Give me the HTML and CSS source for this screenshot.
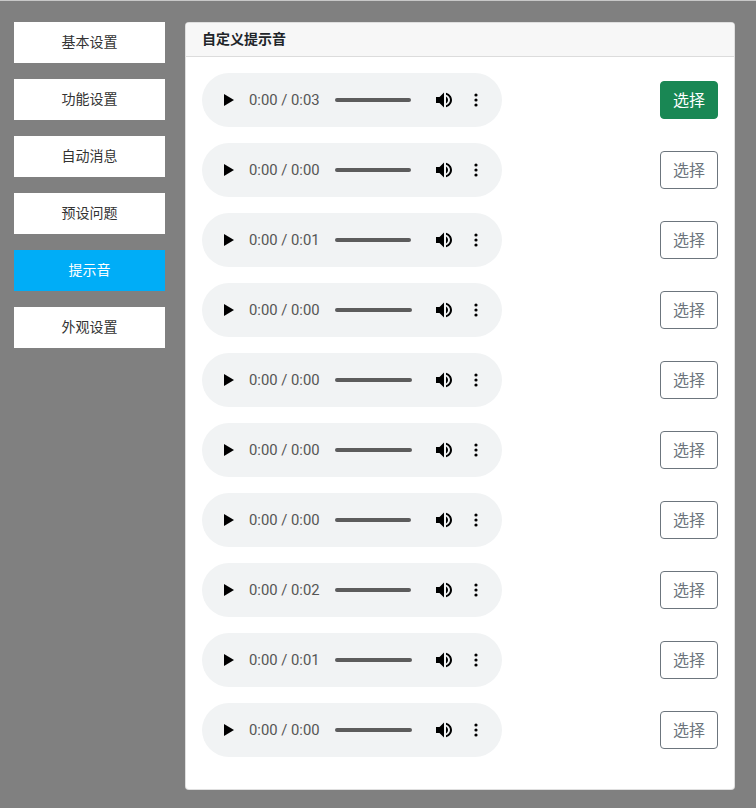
FILE: index.html
```html
<!DOCTYPE html>
<html lang="zh-CN">
<head>
    <meta charset="UTF-8">
    <meta name="viewport" content="width=device-width, initial-scale=1.0">
    <title>提示音</title>
    <link rel="stylesheet" href="styles.css">
</head>
<body>
<svg class="icon-defs" width="0" height="0">
    <symbol id="icon-play" viewBox="0 0 12 14"><path d="M1 1v12l10-6z"/></symbol>
    <symbol id="icon-volume" viewBox="0 0 18 18"><path d="M1 6v6h3.500L9 16.500V1.500L4.500 6zM11 1.800v2c2.300.8 4 2.800 4 5.200s-1.700 4.400-4 5.200v2c3.400-.9 6-3.700 6-7.200s-2.600-6.300-6-7.200zM11 5.500v7c1.300-.7 2-2 2-3.500s-.7-2.800-2-3.500z"/></symbol>
    <symbol id="icon-more" viewBox="0 0 4 14"><circle cx="2" cy="2" r="1.600"/><circle cx="2" cy="7" r="1.600"/><circle cx="2" cy="12" r="1.600"/></symbol>
</svg>
<div class="page">
    <nav class="side-menu">
        <a class="menu-item">基本设置</a>
        <a class="menu-item">功能设置</a>
        <a class="menu-item">自动消息</a>
        <a class="menu-item">预设问题</a>
        <a class="menu-item active">提示音</a>
        <a class="menu-item">外观设置</a>
    </nav>
    <section class="card">
        <div class="card-header">自定义提示音</div>
        <div class="card-body">
            <div class="sound-row">
                <div class="player">
                    <svg class="icon-play"><use href="#icon-play"/></svg>
                    <span class="player-time">0:00 / 0:03</span>
                    <span class="player-track"></span>
                    <svg class="icon-volume"><use href="#icon-volume"/></svg>
                    <svg class="icon-more"><use href="#icon-more"/></svg>
                </div>
                <button class="btn btn-selected">选择</button>
            </div>
            <div class="sound-row">
                <div class="player">
                    <svg class="icon-play"><use href="#icon-play"/></svg>
                    <span class="player-time">0:00 / 0:00</span>
                    <span class="player-track"></span>
                    <svg class="icon-volume"><use href="#icon-volume"/></svg>
                    <svg class="icon-more"><use href="#icon-more"/></svg>
                </div>
                <button class="btn">选择</button>
            </div>
            <div class="sound-row">
                <div class="player">
                    <svg class="icon-play"><use href="#icon-play"/></svg>
                    <span class="player-time">0:00 / 0:01</span>
                    <span class="player-track"></span>
                    <svg class="icon-volume"><use href="#icon-volume"/></svg>
                    <svg class="icon-more"><use href="#icon-more"/></svg>
                </div>
                <button class="btn">选择</button>
            </div>
            <div class="sound-row">
                <div class="player">
                    <svg class="icon-play"><use href="#icon-play"/></svg>
                    <span class="player-time">0:00 / 0:00</span>
                    <span class="player-track wide"></span>
                    <svg class="icon-volume"><use href="#icon-volume"/></svg>
                    <svg class="icon-more"><use href="#icon-more"/></svg>
                </div>
                <button class="btn">选择</button>
            </div>
            <div class="sound-row">
                <div class="player">
                    <svg class="icon-play"><use href="#icon-play"/></svg>
                    <span class="player-time">0:00 / 0:00</span>
                    <span class="player-track wide"></span>
                    <svg class="icon-volume"><use href="#icon-volume"/></svg>
                    <svg class="icon-more"><use href="#icon-more"/></svg>
                </div>
                <button class="btn">选择</button>
            </div>
            <div class="sound-row">
                <div class="player">
                    <svg class="icon-play"><use href="#icon-play"/></svg>
                    <span class="player-time">0:00 / 0:00</span>
                    <span class="player-track wide"></span>
                    <svg class="icon-volume"><use href="#icon-volume"/></svg>
                    <svg class="icon-more"><use href="#icon-more"/></svg>
                </div>
                <button class="btn">选择</button>
            </div>
            <div class="sound-row">
                <div class="player">
                    <svg class="icon-play"><use href="#icon-play"/></svg>
                    <span class="player-time">0:00 / 0:00</span>
                    <span class="player-track"></span>
                    <svg class="icon-volume"><use href="#icon-volume"/></svg>
                    <svg class="icon-more"><use href="#icon-more"/></svg>
                </div>
                <button class="btn">选择</button>
            </div>
            <div class="sound-row">
                <div class="player">
                    <svg class="icon-play"><use href="#icon-play"/></svg>
                    <span class="player-time">0:00 / 0:02</span>
                    <span class="player-track"></span>
                    <svg class="icon-volume"><use href="#icon-volume"/></svg>
                    <svg class="icon-more"><use href="#icon-more"/></svg>
                </div>
                <button class="btn">选择</button>
            </div>
            <div class="sound-row">
                <div class="player">
                    <svg class="icon-play"><use href="#icon-play"/></svg>
                    <span class="player-time">0:00 / 0:01</span>
                    <span class="player-track wide"></span>
                    <svg class="icon-volume"><use href="#icon-volume"/></svg>
                    <svg class="icon-more"><use href="#icon-more"/></svg>
                </div>
                <button class="btn">选择</button>
            </div>
            <div class="sound-row">
                <div class="player">
                    <svg class="icon-play"><use href="#icon-play"/></svg>
                    <span class="player-time">0:00 / 0:00</span>
                    <span class="player-track wide"></span>
                    <svg class="icon-volume"><use href="#icon-volume"/></svg>
                    <svg class="icon-more"><use href="#icon-more"/></svg>
                </div>
                <button class="btn">选择</button>
            </div>
        </div>
    </section>
</div>
</body>
</html>
```

FILE: styles.css
```css
* {
    box-sizing: border-box;
}
html,
body {
    margin: 0;
    height: 100%;
}
body {
    background-color: #808080;
    border-top: 1px solid #c8c8c8;
    font-family: "Noto Sans CJK SC", "Open Sans", sans-serif;
    font-size: 14px;
    color: #212529;
}
.icon-defs {
    position: absolute;
}
.page {
    display: flex;
    align-items: flex-start;
    gap: 20px;
    padding: 21px 21px 0 14px;
}
.side-menu {
    display: flex;
    flex-direction: column;
    gap: 16px;
    width: 151px;
    flex-shrink: 0;
}
.menu-item {
    display: flex;
    align-items: center;
    justify-content: center;
    height: 41px;
    padding-bottom: 4px;
    background-color: #fff;
    color: #333;
}
.menu-item.active {
    background-color: #00adf7;
    color: #fff;
}
.card {
    flex: 1;
    background-color: #fff;
    border: 1px solid rgba(0, 0, 0, 0.125);
    border-radius: 4px;
    overflow: hidden;
}
.card-header {
    height: 34px;
    padding: 0 16px 3px;
    display: flex;
    align-items: center;
    background-color: #f7f7f7;
    border-bottom: 1px solid #dcdcdc;
    font-weight: 700;
}
.card-body {
    display: flex;
    flex-direction: column;
    gap: 16px;
    padding: 16px 16px 32px;
}
.sound-row {
    display: flex;
    align-items: center;
    justify-content: space-between;
}
.player {
    display: flex;
    align-items: center;
    width: 300px;
    height: 54px;
    padding-left: 21px;
    background-color: #f1f3f4;
    border-radius: 27px;
}
.icon-play {
    width: 12px;
    height: 14px;
    margin-right: 14px;
    fill: #000;
}
.player-time {
    width: 86px;
    font-family: Roboto, sans-serif;
    font-size: 14.8px;
    color: #555;
    white-space: nowrap;
}
.player-track {
    width: 76px;
    height: 4px;
    margin-right: 24px;
    background-color: #5c5c5c;
    border-radius: 2px;
}
.player-track.wide {
    width: 77px;
    margin-right: 23px;
}
.icon-volume {
    width: 18px;
    height: 18px;
    margin-right: 21px;
    fill: #000;
}
.icon-more {
    width: 4px;
    height: 14px;
    fill: #000;
}
.btn {
    width: 58px;
    height: 38px;
    padding: 0 0 2px;
    background-color: #fff;
    border: 1px solid #6c757d;
    border-radius: 4px;
    color: #6c757d;
    font-family: inherit;
    font-size: 16px;
}
.btn-selected {
    background-color: #198754;
    border-color: #198754;
    color: #fff;
}
```
